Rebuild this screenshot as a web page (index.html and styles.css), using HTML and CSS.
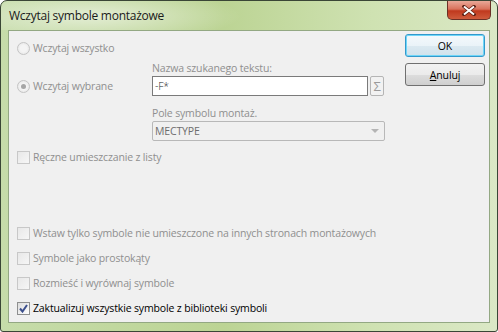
FILE: index.html
```html
<!DOCTYPE html>
<html lang="pl">
<head>
  <meta charset="UTF-8" />
  <title>Wczytaj symbole montażowe</title>
  <link rel="stylesheet" href="styles.css">
</head>
<body>

<!-- Dialog window -->
<div class="window">
  <div class="titlebar">
    <span class="title">Wczytaj symbole montażowe</span>
    <button class="close-btn">
      <svg width="14" height="11" viewBox="0 0 14 11">
        <path d="M2 1.5 L12 9.5 M12 1.5 L2 9.5" stroke="#5a2014" stroke-width="3.4" stroke-linecap="square"/>
        <path d="M2 1.5 L12 9.5 M12 1.5 L2 9.5" stroke="#fff" stroke-width="2"/>
      </svg>
    </button>
  </div>

  <div class="client">
    <div class="main">
      <div class="row disabled">
        <span class="radio"></span>
        <span>Wczytaj wszystko</span>
      </div>

      <div class="field-label disabled">Nazwa szukanego tekstu:</div>
      <div class="input-row">
        <div class="row left-col disabled">
          <span class="radio checked"></span>
          <span>Wczytaj wybrane</span>
        </div>
        <div class="textbox">-F*</div>
        <div class="sigma-btn">&Sigma;</div>
      </div>

      <div class="field-label second disabled">Pole symbolu montaż.</div>
      <div class="select-row">
        <div class="select disabled">
          <span>MECTYPE</span>
          <span class="arrow"></span>
        </div>
      </div>

      <div class="row check-first disabled">
        <span class="checkbox"></span>
        <span>Ręczne umieszczanie z listy</span>
      </div>

      <div class="row check-group disabled">
        <span class="checkbox"></span>
        <span>Wstaw tylko symbole nie umieszczone na innych stronach montażowych</span>
      </div>
      <div class="row check-next disabled">
        <span class="checkbox"></span>
        <span>Symbole jako prostokąty</span>
      </div>
      <div class="row check-next disabled">
        <span class="checkbox"></span>
        <span>Rozmieść i wyrównaj symbole</span>
      </div>
      <div class="row check-next">
        <span class="checkbox on">
          <svg width="9" height="9" viewBox="0 0 9 9">
            <path d="M1 4.5 L3.5 7.5 L8 1" fill="none" stroke="#3c4f8c" stroke-width="2"/>
          </svg>
        </span>
        <span>Zaktualizuj wszystkie symbole z biblioteki symboli</span>
      </div>
    </div>

    <div class="buttons">
      <button class="btn default">OK</button>
      <button class="btn"><u>A</u>nuluj</button>
    </div>
  </div>
</div>

</body>
</html>
```

FILE: styles.css
```css
body {
  margin: 0;
  font-family: 'Open Sans', 'Noto Sans', sans-serif;
  font-size: 10.5px;
  letter-spacing: -0.15px;
  background: #ffffff;
}

.window {
  width: 496px;
  height: 330px;
  border: 1px solid #3a4636;
  border-radius: 7px 7px 3px 3px;
  background: linear-gradient(to right, #c6dcaa 0%, #bcd494 45%, #cfe2b2 75%, #dbe8c6 100%);
  display: flex;
  flex-direction: column;
}

.titlebar {
  height: 29px;
  display: flex;
  align-items: flex-start;
  justify-content: space-between;
  background: radial-gradient(ellipse 150px 26px at 90px 15px, rgba(255,255,255,0.55), rgba(255,255,255,0) 100%);
  border-radius: 7px 7px 0 0;
}

.title {
  margin: 6px 0 0 8px;
  color: #1a1a1a;
  font-size: 12px;
  letter-spacing: -0.25px;
}

.close-btn {
  width: 44px;
  height: 19px;
  margin-right: 6px;
  padding: 0;
  border: 1px solid #6a3026;
  border-top: none;
  border-radius: 0 0 5px 5px;
  background: linear-gradient(to bottom, #e9a898 0%, #d9725c 45%, #c0391e 55%, #cf5b3c 100%);
  display: flex;
  align-items: center;
  justify-content: center;
}

.client {
  flex: 1;
  margin: 0 7px 8px 7px;
  background: #f0f0f0;
  border: 1px solid #93a883;
  display: flex;
}

.main {
  flex: 1;
  padding: 10px 0 0 8px;
  color: #000;
}

.disabled {
  color: #8f8f8f;
}

.row {
  height: 14px;
  display: flex;
  align-items: center;
  gap: 3px;
  white-space: nowrap;
}

.radio {
  width: 11px;
  height: 11px;
  border: 1px solid #c4c4c4;
  border-radius: 50%;
  background: radial-gradient(circle, #f4f4f4 40%, #e2e2e2 100%);
  position: relative;
}

.radio.checked::after {
  content: "";
  position: absolute;
  left: 3px;
  top: 3px;
  width: 5px;
  height: 5px;
  border-radius: 50%;
  background: #a6a6a6;
}

.field-label {
  height: 14px;
  line-height: 14px;
  margin: 6px 0 0 135px;
}

.field-label.second {
  margin-top: 10px;
}

.input-row {
  display: flex;
  align-items: center;
  margin-top: 1px;
  height: 20px;
}

.left-col {
  width: 135px;
}

.textbox {
  width: 212px;
  height: 18px;
  line-height: 18px;
  padding-left: 2px;
  border: 1px solid #7a7a7a;
  background: #fff;
  color: #222;
  font-weight: 300;
}

.sigma-btn {
  width: 12px;
  height: 18px;
  margin-left: 2px;
  border: 1px solid #b5b5b5;
  border-radius: 2px;
  color: #9a9a9a;
  font-size: 13px;
  line-height: 18px;
  text-align: center;
  background: #f2f2f2;
}

.select-row {
  margin: 1px 0 0 135px;
}

.select {
  width: 229px;
  height: 18px;
  padding-left: 2px;
  border: 1px solid #b8b8b8;
  border-radius: 2px;
  background: #f0f0f0;
  display: flex;
  align-items: center;
  justify-content: space-between;
  color: #6d6d6d;
}

.arrow {
  width: 0;
  height: 0;
  margin-right: 5px;
  border-left: 4px solid transparent;
  border-right: 4px solid transparent;
  border-top: 4px solid #b4b4b4;
}

.checkbox {
  width: 11px;
  height: 11px;
  border: 1px solid #c8c8c8;
  background: linear-gradient(135deg, #e8e8e8, #f6f6f6);
  display: flex;
  align-items: center;
  justify-content: center;
}

.checkbox.on {
  border-color: #8e8f8f;
  background: linear-gradient(135deg, #dcdcdc, #ffffff);
}

.check-first {
  margin-top: 9px;
}

.check-group {
  margin-top: 62px;
}

.check-next {
  margin-top: 11px;
}

.buttons {
  width: 80px;
  padding: 3px 4px 0 0;
  display: flex;
  flex-direction: column;
  gap: 6px;
}

.btn {
  height: 23px;
  border: 1px solid #707070;
  border-radius: 3px;
  background: linear-gradient(to bottom, #f2f2f2 0%, #ebebeb 50%, #dddddd 51%, #cfcfcf 100%);
  font-family: 'Open Sans', 'Noto Sans', sans-serif;
  font-size: 10.5px;
  letter-spacing: -0.15px;
  color: #000;
  padding: 0;
}

.btn.default {
  border-color: #3399cc;
  box-shadow: inset 0 0 0 1px #6fd6f8;
  background: linear-gradient(to bottom, #f4f9fc 0%, #eaf3f8 50%, #dbe9f1 51%, #d0e2ec 100%);
}
```
